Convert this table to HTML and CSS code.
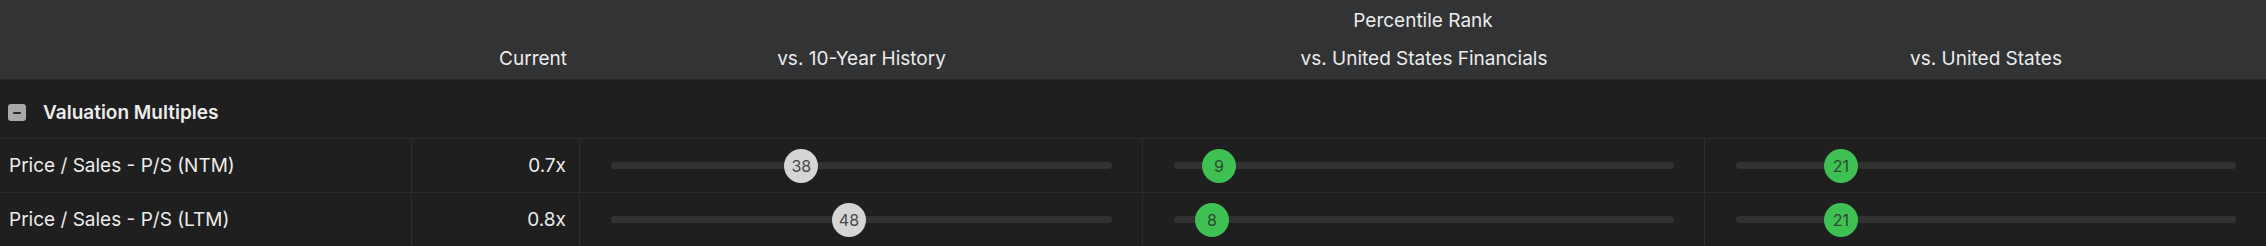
FILE: index.html
```html
<!DOCTYPE html>
<html lang="en">
<head>
<meta charset="utf-8">
<title>Valuation Multiples</title>
<link rel="stylesheet" href="styles.css">
</head>
<body>
<div class="table">
  <div class="head">
    <div class="hrow hrow-top">
      <div class="hcell hgroup">Percentile Rank</div>
    </div>
    <div class="hrow hrow-cols">
      <div class="hcell"></div>
      <div class="hcell hright">Current</div>
      <div class="hcell hcenter">vs. 10-Year History</div>
      <div class="hcell hcenter">vs. United States Financials</div>
      <div class="hcell hcenter hsep">vs. United States</div>
    </div>
  </div>

  <div class="section">
    <span class="toggle"><span class="toggle-bar"></span></span>
    <span class="section-title">Valuation Multiples</span>
  </div>

  <div class="row">
    <div class="cell label">Price / Sales - P/S (NTM)</div>
    <div class="cell value">0.7x</div>
    <div class="cell slider"><div class="track"><span class="badge gray" style="left:38%">38</span></div></div>
    <div class="cell slider"><div class="track"><span class="badge green" style="left:9%">9</span></div></div>
    <div class="cell slider last"><div class="track"><span class="badge green" style="left:21%">21</span></div></div>
  </div>

  <div class="row">
    <div class="cell label">Price / Sales - P/S (LTM)</div>
    <div class="cell value">0.8x</div>
    <div class="cell slider"><div class="track"><span class="badge gray" style="left:47.5%">48</span></div></div>
    <div class="cell slider"><div class="track"><span class="badge green" style="left:7.6%">8</span></div></div>
    <div class="cell slider last"><div class="track"><span class="badge green" style="left:21%">21</span></div></div>
  </div>
</div>
</body>
</html>
```

FILE: styles.css
```css
* { box-sizing: border-box; }

html, body {
  margin: 0;
  padding: 0;
  background: #1f1f1f;
}

body {
  font-family: Inter, "Noto Sans", "Liberation Sans", sans-serif;
  color: #ececec;
  font-size: 19px;
  width: 2266px;
  height: 246px;
  overflow: hidden;
}

.table {
  --cols: 412px 168px 563px 562px 1fr;
  display: flex;
  flex-direction: column;
}

.head {
  background: #323335;
  border-bottom: 1px solid #29292a;
}

.hrow {
  display: grid;
  grid-template-columns: var(--cols);
}

.hrow-top {
  height: 40px;
}

.hgroup {
  grid-column: 3 / 6;
  display: flex;
  align-items: center;
  justify-content: center;
}

.hrow-cols {
  height: 39px;
}

.hcell {
  display: flex;
  align-items: center;
}

.hrow-cols .hcell {
  padding-bottom: 2px;
}

.hright {
  justify-content: flex-end;
  padding-right: 13px;
}

.hcenter {
  justify-content: center;
}

.hsep {
  border-left: 1px solid #2e2f2f;
}

.section {
  height: 59px;
  border-bottom: 1px solid #2c2c2c;
  display: flex;
  align-items: center;
  padding: 7px 0 0 8px;
  gap: 17px;
}

.toggle {
  width: 18px;
  height: 17px;
  border-radius: 3px;
  background: #a9a9a9;
  display: flex;
  align-items: center;
  justify-content: center;
}

.toggle-bar {
  width: 8px;
  height: 2px;
  background: #2a2a2a;
  border-radius: 1px;
}

.section-title {
  font-weight: 600;
}

.row {
  display: grid;
  grid-template-columns: var(--cols);
  height: 54px;
  border-bottom: 1px solid #2c2c2c;
}

.cell {
  display: flex;
  align-items: center;
  border-right: 1px solid #2c2c2c;
}

.cell.last {
  border-right: none;
}

.label {
  padding-left: 9px;
}

.value {
  justify-content: flex-end;
  padding-right: 13px;
}

.slider {
  padding: 0 30px 0 31px;
}

.track {
  position: relative;
  flex: 1;
  height: 7px;
  border-radius: 4px;
  background: #323232;
}

.badge {
  position: absolute;
  top: 50%;
  width: 34px;
  height: 34px;
  border-radius: 50%;
  transform: translate(-50%, -50%);
  display: flex;
  align-items: center;
  justify-content: center;
  font-size: 16px;
}

.badge.gray {
  background: #d5d5d5;
  color: #484848;
}

.badge.green {
  background: #3ec052;
  color: #2e4a32;
}
```
